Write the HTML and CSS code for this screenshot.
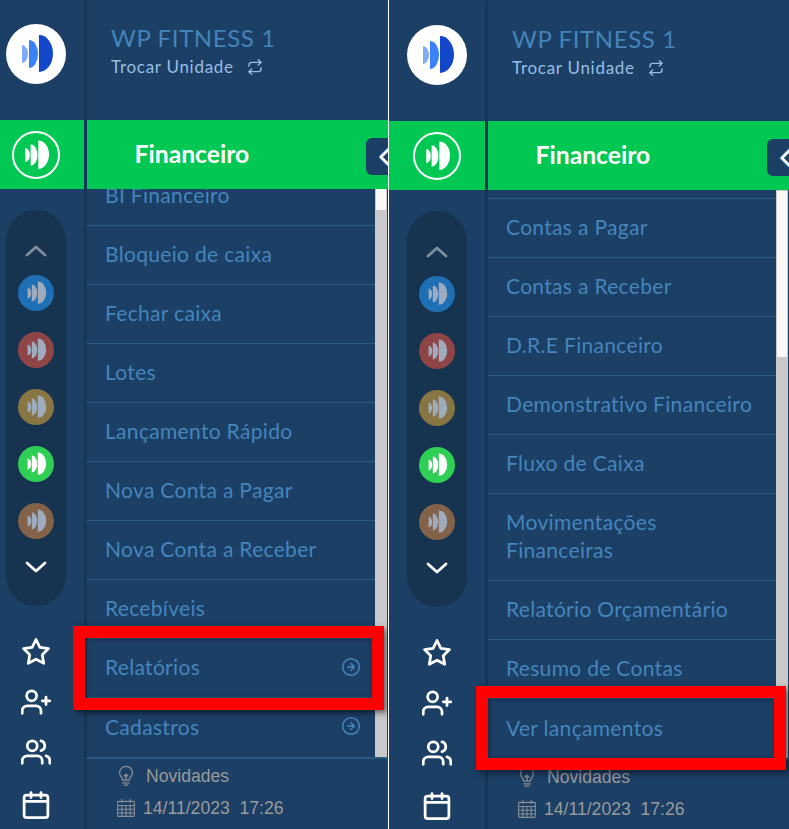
FILE: index.html
```html
<!DOCTYPE html>
<html lang="pt-BR">

<head>
  <meta charset="utf-8">
  <title>Financeiro</title>
  <link rel="stylesheet" href="styles.css">
</head>

<body>
  <svg class="defs">
    <symbol id="mark" viewBox="0 0 60 60">
      <path d="M16 21A6 9 0 0 1 16 39Z" />
      <path d="M23 16A9 14 0 0 1 23 44Z" />
      <path d="M33 11A14 18.500 0 0 1 33 48Z" />
    </symbol>
    <symbol id="i-star" viewBox="0 0 24 24">
      <polygon points="12 2 15.09 8.26 22 9.27 17 14.14 18.18 21.02 12 17.77 5.82 21.02 7 14.14 2 9.27 8.91 8.26" />
    </symbol>
    <symbol id="i-user-plus" viewBox="0 0 24 24">
      <path d="M16 21v-2a4 4 0 0 0-4-4H5a4 4 0 0 0-4 4v2" />
      <circle cx="8.500" cy="7" r="4" />
      <path d="M20 8v6M23 11h-6" />
    </symbol>
    <symbol id="i-users" viewBox="0 0 24 24">
      <path d="M17 21v-2a4 4 0 0 0-4-4H5a4 4 0 0 0-4 4v2" />
      <circle cx="9" cy="7" r="4" />
      <path d="M23 21v-2a4 4 0 0 0-3-3.870M16 3.130a4 4 0 0 1 0 7.750" />
    </symbol>
    <symbol id="i-calendar" viewBox="0 0 24 24">
      <rect x="2.500" y="4" width="19" height="18" rx="2" />
      <path d="M16 2v4M8 2v4M2.500 9h19" />
    </symbol>
    <symbol id="i-repeat" viewBox="0 0 24 24">
      <path d="M17 1l4 4-4 4" />
      <path d="M3 11V9a4 4 0 0 1 4-4h14" />
      <path d="M7 23l-4-4 4-4" />
      <path d="M21 13v2a4 4 0 0 1-4 4H3" />
    </symbol>
    <symbol id="i-arrow" viewBox="0 0 24 24">
      <circle cx="12" cy="12" r="10" />
      <path d="M12 16l4-4-4-4M8 12h8" />
    </symbol>
    <symbol id="i-up" viewBox="0 0 24 24">
      <path d="M3 17l9-8 9 8" />
    </symbol>
    <symbol id="i-down" viewBox="0 0 24 24">
      <path d="M3 8l9 8 9-8" />
    </symbol>
    <symbol id="i-bulb" viewBox="0 0 24 24">
      <path d="M8.500 16.500c0-2.500-3.500-4-3.500-8a7 7 0 0 1 14 0c0 4-3.500 5.500-3.500 8z" />
      <path d="M10 12l2-2 2 2M12 10v6M8.500 19.500h7M10 22h4" />
    </symbol>
    <symbol id="i-cal-grid" viewBox="0 0 24 24">
      <rect x="2" y="4" width="20" height="18" rx="1" />
      <path d="M7 1.500v4M17 1.500v4M2 9h20M2 13.500h20M2 18h20M7 9v13M12 9v13M17 9v13" />
    </symbol>
  </svg>

  <div class="screens">
    <section class="panel panel-cropped">
      <aside class="rail">
        <div class="logo">
          <svg viewBox="0 0 60 60">
            <path class="m1" d="M16 21A6 9 0 0 1 16 39Z" />
            <path class="m2" d="M23 16A9 14 0 0 1 23 44Z" />
            <path class="m3" d="M33 11A14 18.500 0 0 1 33 48Z" />
          </svg>
        </div>
        <div class="rail-active">
          <span class="ring"><svg class="mark"><use href="#mark" /></svg></span>
        </div>
        <div class="pill">
          <svg class="line chevron dim"><use href="#i-up" /></svg>
          <div class="dots">
            <span class="dot blue"><svg class="mark"><use href="#mark" /></svg></span>
            <span class="dot red"><svg class="mark"><use href="#mark" /></svg></span>
            <span class="dot olive"><svg class="mark"><use href="#mark" /></svg></span>
            <span class="dot green"><svg class="mark"><use href="#mark" /></svg></span>
            <span class="dot brown"><svg class="mark"><use href="#mark" /></svg></span>
          </div>
          <svg class="line chevron"><use href="#i-down" /></svg>
        </div>
        <div class="shortcuts">
          <svg class="line shortcut"><use href="#i-star" /></svg>
          <svg class="line shortcut"><use href="#i-user-plus" /></svg>
          <svg class="line shortcut"><use href="#i-users" /></svg>
          <svg class="line shortcut shortcut-last"><use href="#i-calendar" /></svg>
        </div>
      </aside>

      <div class="main">
        <header class="head">
          <div class="unit">WP FITNESS 1</div>
          <div class="switch">Trocar Unidade <svg class="line swap"><use href="#i-repeat" /></svg></div>
        </header>
        <div class="title">Financeiro</div>
        <button class="collapse"><svg class="line"><path d="M11 3L3 11l8 8" /></svg></button>
        <div class="body">
          <ul class="menu scrolled">
            <li>BI Financeiro</li>
            <li>Bloqueio de caixa</li>
            <li>Fechar caixa</li>
            <li>Lotes</li>
            <li>Lançamento Rápido</li>
            <li>Nova Conta a Pagar</li>
            <li>Nova Conta a Receber</li>
            <li>Recebíveis</li>
            <li>Relatórios <svg class="line go"><use href="#i-arrow" /></svg></li>
            <li class="last">Cadastros <svg class="line go"><use href="#i-arrow" /></svg></li>
          </ul>
          <div class="track"><div class="thumb thumb-short"></div></div>
        </div>
        <footer class="foot">
          <div class="foot-news"><svg class="line icon-bulb"><use href="#i-bulb" /></svg> Novidades</div>
          <div class="foot-date"><svg class="line icon-grid"><use href="#i-cal-grid" /></svg> 14/11/2023&nbsp; 17:26</div>
        </footer>
        <div class="mark-box box-left"></div>
      </div>
    </section>

    <section class="panel panel-full">
      <aside class="rail">
        <div class="logo">
          <svg viewBox="0 0 60 60">
            <path class="m1" d="M16 21A6 9 0 0 1 16 39Z" />
            <path class="m2" d="M23 16A9 14 0 0 1 23 44Z" />
            <path class="m3" d="M33 11A14 18.500 0 0 1 33 48Z" />
          </svg>
        </div>
        <div class="rail-active">
          <span class="ring"><svg class="mark"><use href="#mark" /></svg></span>
        </div>
        <div class="pill">
          <svg class="line chevron dim"><use href="#i-up" /></svg>
          <div class="dots">
            <span class="dot blue"><svg class="mark"><use href="#mark" /></svg></span>
            <span class="dot red"><svg class="mark"><use href="#mark" /></svg></span>
            <span class="dot olive"><svg class="mark"><use href="#mark" /></svg></span>
            <span class="dot green"><svg class="mark"><use href="#mark" /></svg></span>
            <span class="dot brown"><svg class="mark"><use href="#mark" /></svg></span>
          </div>
          <svg class="line chevron"><use href="#i-down" /></svg>
        </div>
        <div class="shortcuts">
          <svg class="line shortcut"><use href="#i-star" /></svg>
          <svg class="line shortcut"><use href="#i-user-plus" /></svg>
          <svg class="line shortcut"><use href="#i-users" /></svg>
          <svg class="line shortcut shortcut-last"><use href="#i-calendar" /></svg>
        </div>
      </aside>

      <div class="main">
        <header class="head">
          <div class="unit">WP FITNESS 1</div>
          <div class="switch">Trocar Unidade <svg class="line swap"><use href="#i-repeat" /></svg></div>
        </header>
        <div class="title">Financeiro</div>
        <button class="collapse"><svg class="line"><path d="M11 3L3 11l8 8" /></svg></button>
        <div class="body">
          <ul class="menu lined">
            <li>Contas a Pagar</li>
            <li>Contas a Receber</li>
            <li>D.R.E Financeiro</li>
            <li>Demonstrativo Financeiro</li>
            <li>Fluxo de Caixa</li>
            <li class="tall">Movimentações<br>Financeiras</li>
            <li>Relatório Orçamentário</li>
            <li>Resumo de Contas</li>
            <li class="last">Ver lançamentos</li>
          </ul>
          <div class="track"><div class="thumb thumb-long"></div></div>
        </div>
        <footer class="foot">
          <div class="foot-news"><svg class="line icon-bulb"><use href="#i-bulb" /></svg> Novidades</div>
          <div class="foot-date"><svg class="line icon-grid"><use href="#i-cal-grid" /></svg> 14/11/2023&nbsp; 17:26</div>
        </footer>
        <div class="mark-box box-right"></div>
      </div>
    </section>
  </div>
</body>

</html>
```
FILE: styles.css
```css
* {
  box-sizing: border-box;
}

html,
body {
  margin: 0;
  background-color: #fff;
}

body {
  width: 789px;
  height: 829px;
  overflow: hidden;
  font-family: "Lato", "Open Sans", sans-serif;
}

.defs {
  display: none;
}

.screens {
  display: flex;
  gap: 1px;
  height: 829px;
}

.panel {
  display: flex;
  height: 829px;
  overflow: hidden;
  background-color: #1c3f66;
}

.panel-cropped {
  width: 388px;
}

.panel-cropped .rail {
  margin-left: -12px;
}

.panel-full {
  width: 400px;
  padding-top: 1px;
}

/* rail */
.rail {
  flex: 0 0 96px;
  display: flex;
  flex-direction: column;
  align-items: center;
  padding-top: 24px;
}

.logo {
  width: 60px;
  height: 60px;
  border-radius: 100%;
  background-color: #fff;
}

.logo svg {
  display: block;
  width: 60px;
  height: 60px;
}

.m1 {
  fill: #82aafc;
}

.m2 {
  fill: #3b82f6;
}

.m3 {
  fill: #1346c8;
}

.rail-active {
  align-self: stretch;
  height: 69px;
  margin-top: 36px;
  display: flex;
  justify-content: center;
  align-items: center;
  background-color: #00c853;
}

.ring {
  width: 48px;
  height: 48px;
  border: 2px solid #fff;
  border-radius: 100%;
  display: flex;
  justify-content: center;
  align-items: center;
}

.ring .mark {
  flex: none;
  width: 46px;
  height: 46px;
  fill: #fff;
}

.pill {
  width: 60px;
  height: 396px;
  margin-top: 21px;
  padding-top: 28px;
  border-radius: 30px;
  background-color: #16334f;
  display: flex;
  flex-direction: column;
  align-items: center;
}

.dots {
  margin: 13px 0 16px;
  display: flex;
  flex-direction: column;
  gap: 21px;
}

.dot {
  width: 36px;
  height: 36px;
  border-radius: 100%;
  display: block;
}

.mark {
  display: block;
  width: 36px;
  height: 36px;
  fill: #9eacbd;
}

.blue {
  background-color: #1f6fb5;
}

.red {
  background-color: #8f4546;
}

.olive {
  background-color: #877643;
}

.green {
  background-color: #2fce55;
}

.green .mark {
  fill: #fff;
}

.brown {
  background-color: #83624a;
}

.line {
  display: block;
  fill: none;
  stroke: currentColor;
  stroke-width: 2;
  stroke-linecap: round;
  stroke-linejoin: round;
}

.chevron {
  flex: none;
  width: 24px;
  height: 24px;
  stroke-width: 2.8;
  color: #fff;
}

.dim {
  opacity: 0.45;
}

.shortcuts {
  margin-top: 31px;
  display: flex;
  flex-direction: column;
  align-items: center;
  gap: 20px;
  color: #fff;
}

.shortcut {
  width: 30px;
  height: 30px;
  stroke-width: 2.2;
}

.shortcut-last {
  margin-top: 3px;
}

/* main column */
.main {
  position: relative;
  flex: 0 0 304px;
  height: 829px;
  border-left: 3px solid #173556;
  display: flex;
  flex-direction: column;
}

.head {
  height: 120px;
  padding: 23px 0 0 24px;
}

.unit {
  font-size: 24px;
  line-height: 30px;
  letter-spacing: 0.6px;
  color: #4384ba;
}

.switch {
  margin-top: 2px;
  display: flex;
  align-items: center;
  font-size: 17px;
  line-height: 24px;
  letter-spacing: 0.72px;
  color: #96bee2;
}

.swap {
  width: 16px;
  height: 16px;
  margin-left: 13px;
}

.title {
  height: 69px;
  padding-left: 47.5px;
  font-size: 24.7px;
  font-weight: 700;
  line-height: 67px;
  color: #fff;
  background-color: #00c853;
}

.collapse {
  position: absolute;
  top: 138px;
  left: 279px;
  width: 40px;
  height: 37px;
  padding: 0 0 0 12px;
  border: 0;
  border-radius: 6px;
  display: flex;
  align-items: center;
  background-color: #1c3f66;
  color: #fff;
}

.collapse svg {
  width: 14px;
  height: 22px;
  stroke-width: 2.5;
  filter: drop-shadow(-1px 0 0 #4a90d9);
}

.body {
  height: 568px;
  display: flex;
  overflow: hidden;
}

.menu {
  flex: 0 0 288px;
  margin: 0;
  padding: 0;
  list-style: none;
  font-size: 21px;
  letter-spacing: 0.32px;
  color: #4485bb;
}

.scrolled {
  margin-top: -22px;
}

.lined {
  margin-top: 8px;
  border-top: 1px solid #2c5a82;
}

.menu li {
  height: 59px;
  padding: 0 14px 3px 18px;
  border-bottom: 1px solid #2c5a82;
  display: flex;
  justify-content: space-between;
  align-items: center;
}

.menu li.tall {
  height: 87px;
  display: block;
  padding-top: 14px;
  line-height: 28px;
}

.menu li.last {
  border-bottom: 0;
}

.go {
  width: 20px;
  height: 20px;
  stroke-width: 1.8;
}

.track {
  flex: 0 0 12px;
  padding: 0 1px;
  background-color: #c9c9c9;
}

.thumb {
  background-color: #fbf9f7;
}

.thumb-short {
  height: 21px;
}

.thumb-long {
  height: 166px;
  margin-top: 1px;
}

.foot {
  height: 72px;
  border-top: 2px solid #2c5a82;
  font-family: "Liberation Sans", sans-serif;
  font-size: 17.6px;
  color: #9a9a9a;
}

.foot-news {
  display: flex;
  align-items: center;
  gap: 9px;
  height: 20px;
  margin-top: 7px;
  padding-left: 28px;
}

.foot-date {
  display: flex;
  align-items: center;
  gap: 7px;
  height: 20px;
  margin-top: 12px;
  padding-left: 29px;
}

.icon-bulb {
  flex: none;
  width: 22px;
  height: 22px;
  stroke-width: 1.4;
  color: #8a8f94;
}

.icon-grid {
  flex: none;
  width: 20px;
  height: 20px;
  stroke-width: 1.3;
  color: #8a8f94;
}

/* annotation drawn over the screenshot */
.mark-box {
  position: absolute;
  height: 84px;
  border: 12px solid #f00;
  box-shadow: 3px 3px 6px rgba(0, 0, 0, 0.5), inset 1px 1px 4px rgba(0, 0, 0, 0.4);
}

.box-left {
  top: 626px;
  left: -14px;
  width: 311px;
}

.box-right {
  top: 685px;
  left: -12px;
  width: 310px;
}
```
